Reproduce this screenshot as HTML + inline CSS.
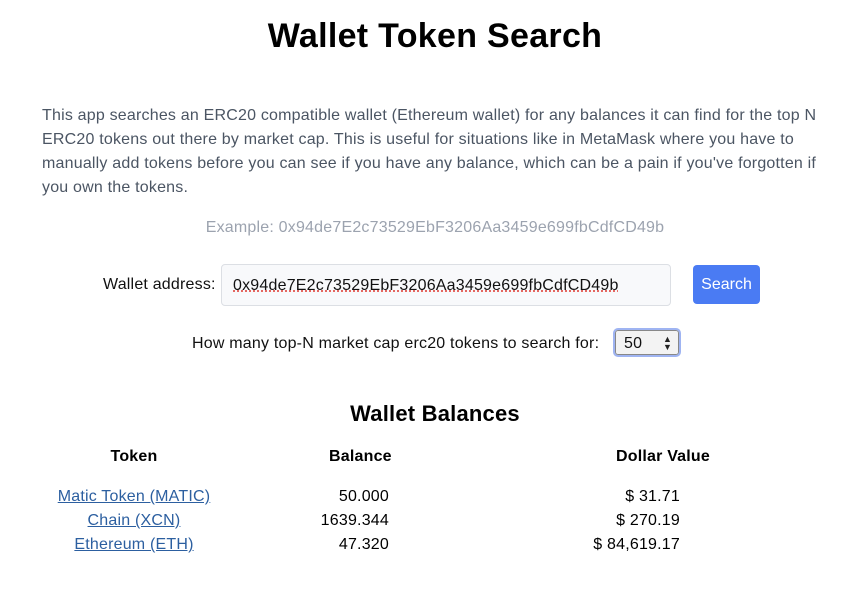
<!DOCTYPE html>
<html><head><meta charset="utf-8"><style>
body{margin:0;width:843px;height:603px;background:#fff;font-family:"Liberation Sans",Arial,sans-serif;position:relative;overflow:hidden;letter-spacing:0.2px}
.a{position:absolute;white-space:nowrap}
h1{position:absolute;left:0;width:870px;top:17px;margin:0;text-align:center;font-size:34px;font-weight:bold;color:#000;letter-spacing:0.3px}
p{position:absolute;left:42px;top:104px;width:775px;margin:0;font-size:16px;line-height:24px;color:#4b5563}
.c{text-align:center}
a{color:#2c5fa0;text-decoration:underline}
</style></head><body>
<h1>Wallet Token Search</h1>
<p>This app searches an ERC20 compatible wallet (Ethereum wallet) for any balances it can find for the top N ERC20 tokens out there by market cap. This is useful for situations like in MetaMask where you have to manually add tokens before you can see if you have any balance, which can be a pain if you've forgotten if you own the tokens.</p>
<div class="a c" style="left:0;width:870px;top:219px;font-size:16px;color:#9ca3af">Example: 0x94de7E2c73529EbF3206Aa3459e699fbCdfCD49b</div>
<div class="a" style="left:103px;top:276px;font-size:16px;color:#111">Wallet address:</div>
<div class="a" style="left:221px;top:264px;width:448px;height:40px;border:1px solid #dcdfe4;border-radius:4px;background:#f8f9fb"></div>
<div class="a" style="left:233px;top:277px;font-size:16px;color:#111;text-decoration:underline dotted #e0433b">0x94de7E2c73529EbF3206Aa3459e699fbCdfCD49b</div>
<div class="a c" style="left:693px;top:265px;width:67px;height:39px;line-height:40px;background:#4a7bf3;color:#fff;border-radius:4px;font-size:16px;letter-spacing:0">Search</div>
<div class="a" style="left:192px;top:335px;font-size:16px;color:#111">How many top-N market cap erc20 tokens to search for:</div>
<div class="a" style="left:613px;top:328px;width:64px;height:25px;border:2px solid #9fb4f2;border-radius:5px;background:#f3f3f3;box-shadow:inset 0 0 0 1px #888"></div>
<div class="a" style="left:624px;top:335px;font-size:16px;color:#111">50</div>
<div class="a" style="left:663px;top:335px;font-size:9px;line-height:8px;color:#222">▲<br>▼</div>
<div class="a c" style="left:0;width:870px;top:401px;font-size:22px;font-weight:bold;color:#000">Wallet Balances</div>
<div class="a c" style="left:84px;width:100px;top:448px;font-size:16px;font-weight:bold">Token</div>
<div class="a" style="left:329px;top:448px;font-size:16px;font-weight:bold">Balance</div>
<div class="a" style="left:616px;top:448px;font-size:16px;font-weight:bold">Dollar Value</div>
<div class="a c" style="left:34px;width:200px;top:488px;font-size:16px"><a>Matic Token (MATIC)</a></div>
<div class="a c" style="left:34px;width:200px;top:512px;font-size:16px"><a>Chain (XCN)</a></div>
<div class="a c" style="left:34px;width:200px;top:536px;font-size:16px"><a>Ethereum (ETH)</a></div>
<div class="a" style="right:454px;top:488px;font-size:16px;text-align:right">50.000</div>
<div class="a" style="right:454px;top:512px;font-size:16px;text-align:right">1639.344</div>
<div class="a" style="right:454px;top:536px;font-size:16px;text-align:right">47.320</div>
<div class="a" style="right:163px;top:488px;font-size:16px;text-align:right">$ 31.71</div>
<div class="a" style="right:163px;top:512px;font-size:16px;text-align:right">$ 270.19</div>
<div class="a" style="right:163px;top:536px;font-size:16px;text-align:right">$ 84,619.17</div>
</body></html>
